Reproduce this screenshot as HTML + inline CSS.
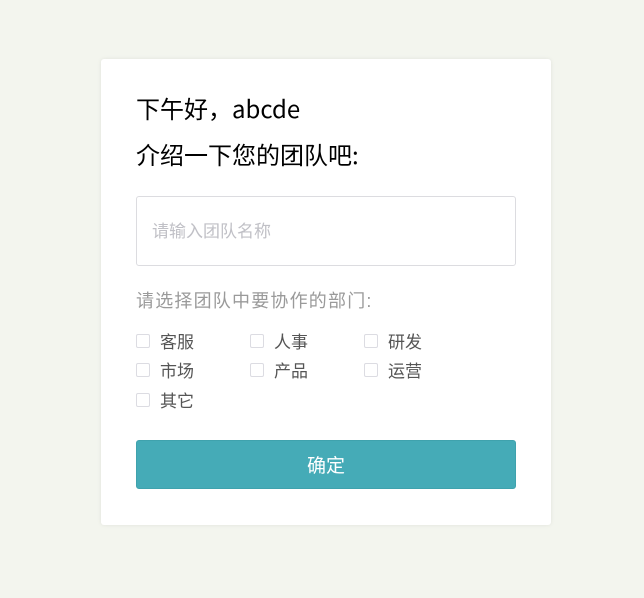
<!DOCTYPE html>
<html><head><meta charset="utf-8"><style>
*{box-sizing:border-box;margin:0;padding:0}
body{width:644px;height:598px;background:#f3f5ee;font-family:"Liberation Sans","Noto Sans CJK SC",sans-serif;position:relative;overflow:hidden}
.card{position:absolute;left:101px;top:59px;width:450px;height:466px;background:#fff;border-radius:3px;box-shadow:0 0 4px rgba(0,0,0,.08)}
.t{position:absolute;left:35px;font-size:24px;color:#000;line-height:30px;font-family:"Noto Sans CJK SC",sans-serif;white-space:nowrap}
.inp{position:absolute;left:35px;top:137px;width:380px;height:70px;border:1px solid #dcdce0;border-radius:3px;font-size:17px;color:#c0c0c6;padding-left:15px;line-height:70px}
.lbl{position:absolute;left:35px;top:229px;font-size:18px;letter-spacing:1.2px;color:#9a9a9a;line-height:26px;white-space:nowrap}
.cb{position:absolute;font-size:17px;color:#555;line-height:20px}
.cb i{position:absolute;left:0;top:3px;width:14px;height:14px;border:1px solid #dcdce2;border-radius:2px}
.cb span{position:absolute;left:24px;top:2px;white-space:nowrap}
.btn{position:absolute;left:35px;top:381px;width:380px;height:49px;background:#45abb7;border-radius:3px;color:#fff;font-size:19px;text-align:center;line-height:51px;border:1px solid #3fa2ad}
</style></head><body>
<div class="card">
<div class="t" style="top:34px">下午好，abcde</div>
<div class="t" style="top:80px">介绍一下您的团队吧:</div>
<div class="inp">请输入团队名称</div>
<div class="lbl">请选择团队中要协作的部门:</div>
<div class="cb" style="left:35px;top:272px"><i></i><span>客服</span></div>
<div class="cb" style="left:149px;top:272px"><i></i><span>人事</span></div>
<div class="cb" style="left:263px;top:272px"><i></i><span>研发</span></div>
<div class="cb" style="left:35px;top:301px"><i></i><span>市场</span></div>
<div class="cb" style="left:149px;top:301px"><i></i><span>产品</span></div>
<div class="cb" style="left:263px;top:301px"><i></i><span>运营</span></div>
<div class="cb" style="left:35px;top:331px"><i></i><span>其它</span></div>
<div class="btn">确定</div>
</div>
</body></html>
